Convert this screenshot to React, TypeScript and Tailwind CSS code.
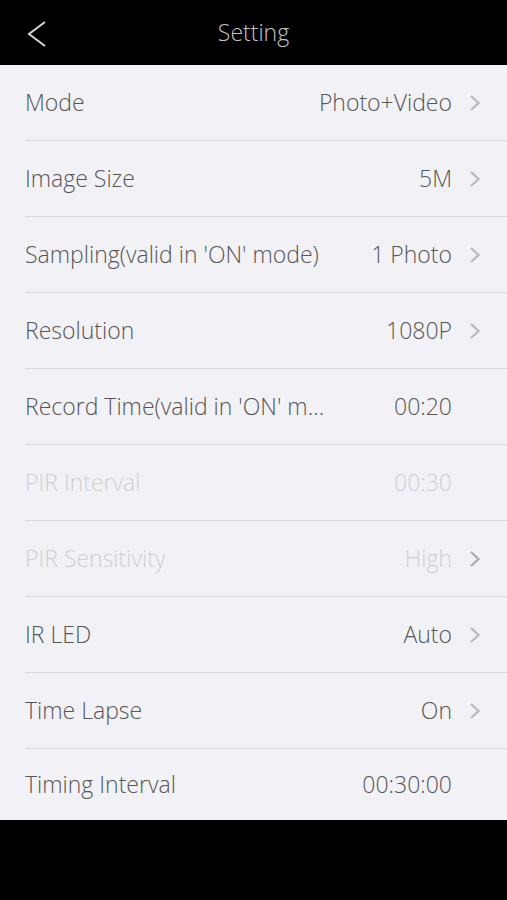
const rows = [
  { label: "Mode", value: "Photo+Video", arrow: true },
  { label: "Image Size", value: "5M", arrow: true },
  { label: "Sampling(valid in 'ON' mode)", value: "1 Photo", arrow: true },
  { label: "Resolution", value: "1080P", arrow: true },
  { label: "Record Time(valid in 'ON' mode)", value: "00:20", arrow: false },
  { label: "PIR Interval", value: "00:30", arrow: false, disabled: true },
  { label: "PIR Sensitivity", value: "High", arrow: true, disabled: true },
  { label: "IR LED", value: "Auto", arrow: true },
  { label: "Time Lapse", value: "On", arrow: true },
  { label: "Timing Interval", value: "00:30:00", arrow: false },
];

const Chevron = ({ className }: { className?: string }) => (
  <svg viewBox="0 0 12 18" className={className} fill="none">
    <path d="M2 2l7.5 7-7.5 7" stroke="currentColor" strokeWidth="2.2" />
  </svg>
);

export default function App() {
  return (
    <div className="flex h-[900px] w-[507px] flex-col bg-black font-['Open_Sans',sans-serif] font-light">
      <header className="relative flex h-[65px] items-center justify-center">
        <svg viewBox="0 0 20 26" className="absolute left-[27px] top-[21px] h-[26px] w-[20px]" fill="none">
          <path d="M18 1L2 13l16 12" stroke="#d6d6d6" strokeWidth="2" />
        </svg>
        <span className="text-[23px] text-[#c4c4c4]">Setting</span>
      </header>

      <ul className="bg-[#f2f2f6]">
        {rows.map((row, i) => (
          <li
            key={row.label}
            className={`flex items-center pl-[25px] ${
              i === rows.length - 1 ? "h-[71px]" : "h-[76px]"
            }`}
          >
            <div
              className={`flex h-full flex-1 items-center pr-[26px] ${
                i === rows.length - 1 ? "" : "border-b border-[#dadade]"
              }`}
            >
              <span
                className={`max-w-[308px] truncate text-[23px] ${
                  row.disabled ? "text-[#cfcfd2]" : "text-[#555555]"
                }`}
              >
                {row.label}
              </span>
              <span
                className={`ml-auto text-[23px] ${
                  row.disabled ? "text-[#cfcfd2]" : "text-[#555555]"
                }`}
              >
                {row.value}
              </span>
              <span className="ml-[17px] flex w-[12px] justify-center">
                {row.arrow && (
                  <Chevron
                    className={`h-[18px] w-[12px] ${
                      row.disabled ? "text-[#a9a9ad]" : "text-[#b9b9bd]"
                    }`}
                  />
                )}
              </span>
            </div>
          </li>
        ))}
      </ul>
    </div>
  );
}
